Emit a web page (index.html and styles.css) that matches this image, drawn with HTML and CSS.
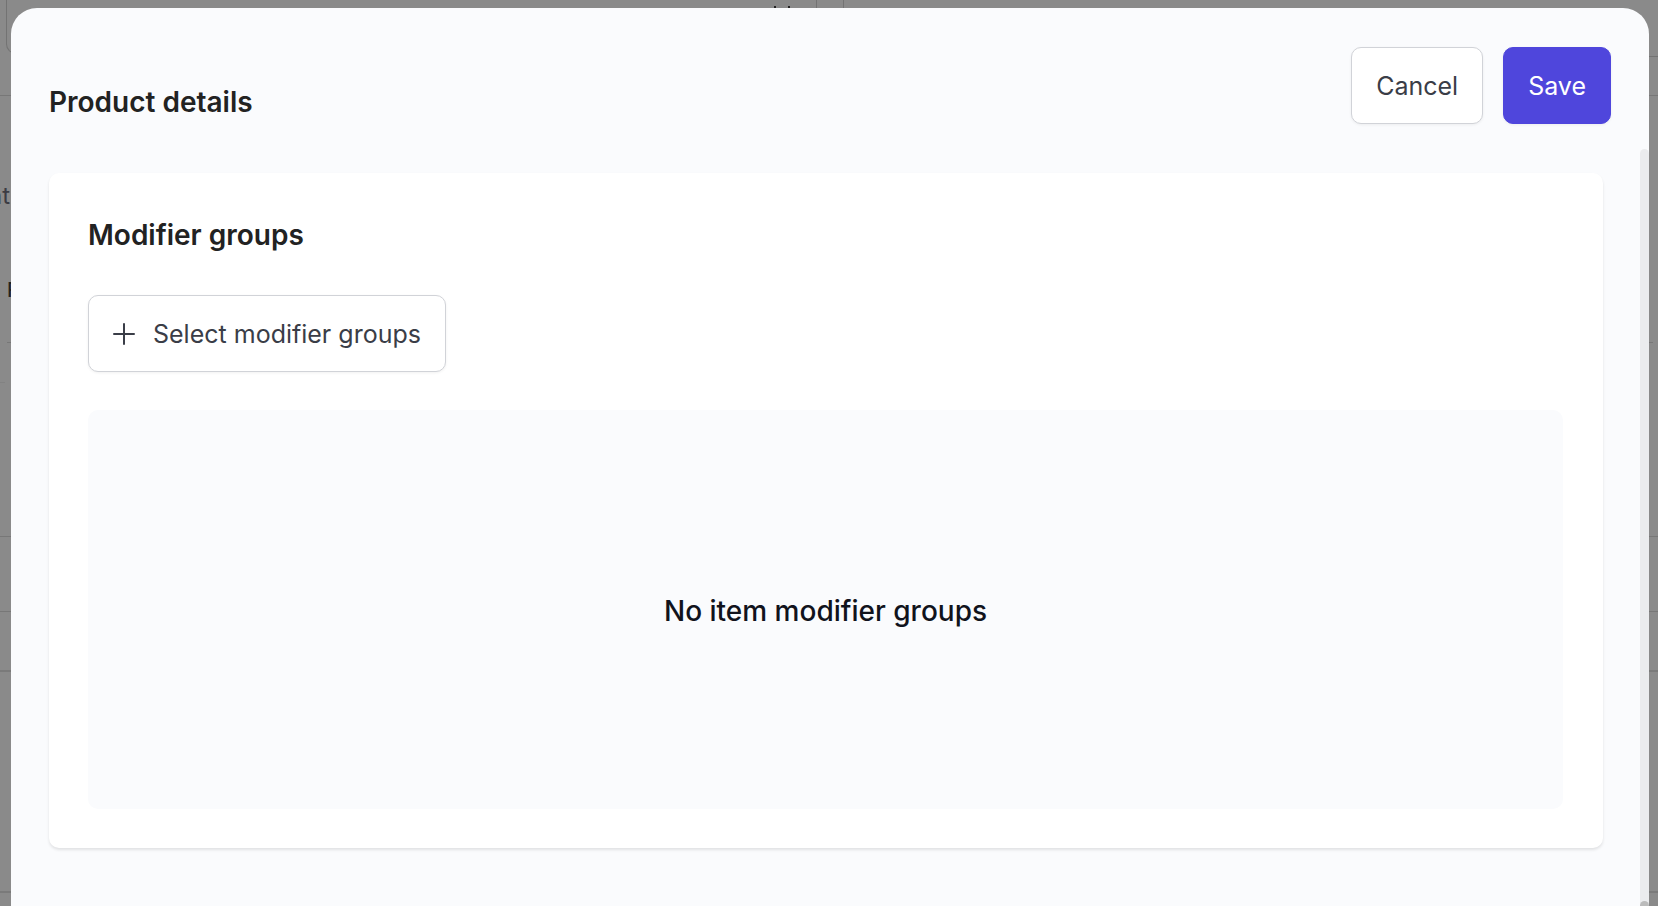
FILE: index.html
```html
<!DOCTYPE html>
<html lang="en">
<head>
<meta charset="utf-8">
<meta name="viewport" content="width=device-width, initial-scale=1">
<title>Product details</title>
<link rel="stylesheet" href="styles.css">
</head>
<body>
<div class="page" aria-hidden="true">
  <div class="toolbar">
    <div class="panel panel-left">
      <svg class="marks" width="20" height="20" viewBox="0 0 20 20" fill="none" stroke="currentColor" stroke-width="2"><path d="M3 0v16M17 0v16"/></svg>
    </div>
    <div class="panel panel-right"></div>
  </div>
  <div class="row row-tabs"><span class="tab">nt</span></div>
  <div class="row row-head"><span class="head">F</span></div>
  <div class="row row-inset"></div>
  <div class="row row-faint"></div>
  <div class="row row-tall"></div>
  <div class="row row-line"></div>
  <div class="row row-bold"></div>
  <div class="row row-last"></div>
</div>
<div class="backdrop">
  <main class="modal" role="dialog" aria-labelledby="modal-title">
    <header class="modal-header">
      <h1 class="title" id="modal-title">Product details</h1>
      <div class="actions">
        <button class="button" type="button">Cancel</button>
        <button class="button button-primary" type="button">Save</button>
      </div>
    </header>
    <div class="modal-body">
      <div class="content">
        <section class="card">
          <h2 class="title">Modifier groups</h2>
          <button class="button" type="button">
            <svg class="plus" width="22" height="22" viewBox="0 0 22 22" fill="none" stroke="currentColor" stroke-width="2" stroke-linecap="round" aria-hidden="true"><path d="M11 1v20M1 11h20"/></svg>
            Select modifier groups
          </button>
          <div class="empty"><p class="empty-text">No item modifier groups</p></div>
        </section>
      </div>
      <div class="track"><div class="thumb"></div></div>
    </div>
  </main>
</div>
</body>
</html>
```
FILE: styles.css
```css
* {
  box-sizing: border-box;
}

body {
  margin: 0;
  height: 100vh;
  overflow: hidden;
  background: #8a8a8a;
  font-family: Inter, "Liberation Sans", sans-serif;
}

.page {
  height: 100vh;
  overflow: hidden;
}

.toolbar {
  display: flex;
  align-items: flex-start;
  gap: 26px;
  height: 96px;
  padding-left: 6px;
  border-bottom: 1px solid #777;
}

.panel {
  border: 1px solid #737373;
  border-top: 0;
}

.panel-left {
  display: flex;
  justify-content: flex-end;
  width: 811px;
  height: 54px;
  padding: 6px 24px;
  border-radius: 0 0 10px 10px;
}

.marks {
  color: #222;
}

.panel-right {
  flex: 1;
  height: 57px;
  border-right: 0;
}

.row {
  border-bottom: 1px solid #777;
}

.row-tabs {
  height: 164px;
  padding-top: 84px;
  border: 0;
}

.tab {
  display: flex;
  justify-content: flex-end;
  width: 10px;
  color: #3c3c43;
  font-size: 24px;
  line-height: 32px;
}

.row-head {
  height: 83px;
  margin: 0 5px 0 7px;
  padding-top: 16px;
}

.head {
  color: #222;
  font-size: 20px;
  font-weight: 500;
  line-height: 28px;
}

.row-inset {
  width: 5px;
  height: 40px;
  border-color: #828282;
}

.row-faint {
  height: 154px;
}

.row-tall {
  height: 75px;
}

.row-line {
  height: 60px;
  border-bottom: 2px solid #7a7a7a;
}

.row-bold {
  height: 221px;
  border-bottom: 2px solid #7a7a7a;
}

.row-last {
  border: 0;
}

.backdrop {
  position: absolute;
  inset: 0;
  display: flex;
  padding: 8px 9px 0 11px;
}

.modal {
  display: flex;
  flex: 1;
  flex-direction: column;
  overflow: hidden;
  border-radius: 26px 26px 0 0;
  background: #fafbfd;
}

.modal-header {
  display: flex;
  align-items: flex-start;
  justify-content: space-between;
  padding: 39px 38px 25px;
}

.modal-header .title {
  padding-top: 37px;
}

.title {
  margin: 0;
  color: #222;
  font-size: 28px;
  font-weight: 600;
  line-height: 36px;
}

.actions {
  display: flex;
  gap: 20px;
}

.button {
  display: inline-flex;
  align-items: center;
  gap: 18px;
  height: 77px;
  padding: 0 24px;
  border: 1px solid #d1d3d8;
  border-radius: 10px;
  background: #fff;
  box-shadow: 0 1px 3px rgba(0, 0, 0, 0.06);
  color: #3a3d47;
  font-family: inherit;
  font-size: 25px;
  line-height: 32px;
}

.button-primary {
  border-color: #4f46dc;
  background: #4f46dc;
  color: #fff;
}

.modal-body {
  display: flex;
  flex: 1;
  min-height: 0;
}

.content {
  flex: 1;
  padding: 24px 37px 0 38px;
}

.card {
  display: flex;
  flex-direction: column;
  align-items: flex-start;
  padding: 44px 40px 39px 39px;
  border-radius: 10px;
  background: #fff;
  box-shadow: 0 2px 3px rgba(0, 0, 0, 0.1);
}

.card .title {
  margin-bottom: 42px;
}

.empty {
  display: flex;
  align-items: center;
  justify-content: center;
  width: 100%;
  height: 399px;
  margin-top: 38px;
  border-radius: 10px;
  background: #fafbfd;
}

.empty-text {
  margin: 0;
  padding-top: 2px;
  color: #11131c;
  font-size: 28px;
  font-weight: 500;
  line-height: 36px;
}

.track {
  display: flex;
  flex-direction: column;
  justify-content: flex-end;
  width: 9px;
  overflow: hidden;
  border-radius: 5px 5px 0 0;
  background: #ebecee;
}

.thumb {
  height: 5px;
  border-radius: 5px 5px 0 0;
  background: #bbb;
}
```
